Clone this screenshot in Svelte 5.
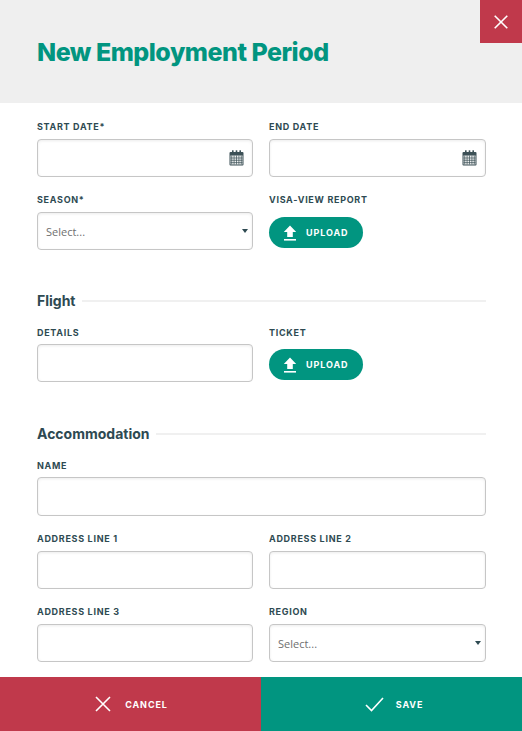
<script lang="ts">
	const calendarDots = [0, 1, 2, 3, 4];
</script>

{#snippet calendar()}
	<svg class="field-icon" width="15" height="16" viewBox="0 0 15 16" aria-hidden="true">
		<rect x="0.5" y="2" width="14" height="13.5" rx="1" fill="#3d5157" />
		<rect x="3" y="0.3" width="1.6" height="3" fill="#3d5157" />
		<rect x="6.7" y="0.3" width="1.6" height="3" fill="#3d5157" />
		<rect x="10.4" y="0.3" width="1.6" height="3" fill="#3d5157" />
		<rect x="1.5" y="5.5" width="12" height="9" fill="#eef0f0" />
		{#each calendarDots as col}
			<line x1={2.7 + col * 2.4} y1="5.5" x2={2.7 + col * 2.4} y2="14.5" stroke="#3d5157" stroke-width="0.7" />
		{/each}
		<line x1="1.5" y1="8" x2="13.5" y2="8" stroke="#3d5157" stroke-width="0.7" />
		<line x1="1.5" y1="10.3" x2="13.5" y2="10.3" stroke="#3d5157" stroke-width="0.7" />
		<line x1="1.5" y1="12.6" x2="13.5" y2="12.6" stroke="#3d5157" stroke-width="0.7" />
	</svg>
{/snippet}

{#snippet upload()}
	<button class="upload" type="button">
		<svg width="14" height="16" viewBox="0 0 14 16" aria-hidden="true">
			<path d="M7 0.5 L13.2 7 H9.8 V12 H4.2 V7 H0.8 Z" fill="#fff" />
			<rect x="1" y="14" width="12" height="1.6" fill="#fff" />
		</svg>
		<span>UPLOAD</span>
	</button>
{/snippet}

{#snippet picker()}
	<div class="control">
		<select>
			<option>Select...</option>
		</select>
		<span class="caret"></span>
	</div>
{/snippet}

<div class="modal">
	<header class="modal-header">
		<h1>New Employment Period</h1>
		<button class="close" type="button" aria-label="Close">
			<svg width="14" height="14" viewBox="0 0 14 14" aria-hidden="true">
				<path d="M0.7 0.7 L13.3 13.3 M13.3 0.7 L0.7 13.3" stroke="#fff" stroke-width="1.6" fill="none" />
			</svg>
		</button>
	</header>

	<form class="modal-body">
		<div class="grid">
			<div class="field">
				<label for="start">START DATE*</label>
				<div class="control">
					<input id="start" />
					{@render calendar()}
				</div>
			</div>
			<div class="field">
				<label for="end">END DATE</label>
				<div class="control">
					<input id="end" />
					{@render calendar()}
				</div>
			</div>
			<div class="field">
				<span class="label">SEASON*</span>
				{@render picker()}
			</div>
			<div class="field">
				<span class="label">VISA-VIEW REPORT</span>
				{@render upload()}
			</div>
		</div>

		<div class="section-title"><h2>Flight</h2></div>
		<div class="grid">
			<div class="field tight">
				<label for="details">DETAILS</label>
				<input id="details" />
			</div>
			<div class="field tight">
				<span class="label">TICKET</span>
				{@render upload()}
			</div>
		</div>

		<div class="section-title after-tight"><h2>Accommodation</h2></div>
		<div class="grid">
			<div class="field wide tight">
				<label for="name">NAME</label>
				<input id="name" class="tall" />
			</div>
			<div class="field">
				<label for="a1">ADDRESS LINE 1</label>
				<input id="a1" />
			</div>
			<div class="field">
				<label for="a2">ADDRESS LINE 2</label>
				<input id="a2" />
			</div>
			<div class="field">
				<label for="a3">ADDRESS LINE 3</label>
				<input id="a3" />
			</div>
			<div class="field">
				<span class="label">REGION</span>
				{@render picker()}
			</div>
		</div>
	</form>

	<footer class="actions">
		<button class="action cancel" type="button">
			<svg width="16" height="16" viewBox="0 0 16 16" aria-hidden="true">
				<path d="M1 1 L15 15 M15 1 L1 15" stroke="#fff" stroke-width="1.6" fill="none" />
			</svg>
			<span>CANCEL</span>
		</button>
		<button class="action save" type="button">
			<svg width="19" height="15" viewBox="0 0 19 15" aria-hidden="true">
				<path d="M1 8 L6.5 13.5 L18 1" stroke="#fff" stroke-width="1.6" fill="none" />
			</svg>
			<span>SAVE</span>
		</button>
	</footer>
</div>

<style>
	:global(body) {
		margin: 0;
		background: #fff;
	}

	.modal {
		display: flex;
		flex-direction: column;
		height: 731px;
		overflow: hidden;
		font-family: 'Inter', 'Liberation Sans', sans-serif;
		color: #2e4a52;
	}

	.modal-header {
		position: relative;
		flex: 0 0 103px;
		display: flex;
		align-items: center;
		padding: 1px 37px 0;
		box-sizing: border-box;
		background: #efefef;
	}

	h1 {
		margin: 0;
		font-size: 25px;
		font-weight: 800;
		letter-spacing: -0.5px;
		color: #019580;
	}

	.close {
		position: absolute;
		top: 0;
		right: 0;
		width: 42px;
		height: 43px;
		display: flex;
		align-items: center;
		justify-content: center;
		padding: 0;
		border: 0;
		background: #c0394b;
	}

	.modal-body {
		flex: 1;
		min-height: 0;
		padding: 18px 36px 0 37px;
	}

	.grid {
		display: grid;
		grid-template-columns: 216px 217px;
		column-gap: 16px;
		row-gap: 17px;
	}

	.field {
		display: flex;
		flex-direction: column;
		gap: 6px;
		min-width: 0;
	}

	.tight {
		gap: 5px;
	}

	.wide {
		grid-column: 1 / -1;
	}

	label,
	.label {
		font-size: 9px;
		line-height: 12px;
		font-weight: 700;
		letter-spacing: 0.7px;
		color: #2e4a52;
	}

	.control {
		position: relative;
	}

	input,
	select {
		display: block;
		width: 100%;
		height: 38px;
		box-sizing: border-box;
		padding: 0 8px;
		border: 1px solid #c6c6c6;
		border-radius: 4px;
		background: #fff;
		box-shadow: inset 0 1px 3px rgba(0, 0, 0, 0.08);
		font-family: 'Open Sans', 'Liberation Sans', sans-serif;
		font-size: 11px;
		color: #6f6f6f;
		appearance: none;
		outline: none;
	}

	input.tall {
		height: 39px;
	}

	.field-icon {
		position: absolute;
		top: 11px;
		right: 9px;
	}

	.caret {
		position: absolute;
		top: 17px;
		right: 5px;
		width: 0;
		height: 0;
		border-left: 3.5px solid transparent;
		border-right: 3.5px solid transparent;
		border-top: 4px solid #2e4a52;
	}

	.upload {
		display: flex;
		align-items: center;
		gap: 9px;
		width: 94px;
		height: 31px;
		margin-top: 5px;
		padding: 0 0 0 14px;
		box-sizing: border-box;
		border: 0;
		border-radius: 16px;
		background: #019580;
		color: #fff;
		font-family: 'Inter', 'Liberation Sans', sans-serif;
		font-size: 9px;
		font-weight: 700;
		letter-spacing: 0.9px;
	}

	.section-title {
		display: flex;
		align-items: center;
		gap: 6px;
		height: 20px;
		margin: 40px 0 17px;
	}

	.section-title.after-tight {
		margin-top: 41px;
	}

	.section-title::after {
		content: '';
		flex: 1;
		height: 2px;
		margin-top: 2px;
		background: #f0f0f0;
	}

	h2 {
		margin: 0;
		font-size: 14px;
		font-weight: 700;
		color: #2e4a52;
	}

	.actions {
		flex: 0 0 54px;
		display: grid;
		grid-template-columns: 261px 261px;
	}

	.action {
		display: flex;
		align-items: center;
		justify-content: center;
		gap: 14px;
		padding: 0;
		border: 0;
		color: #fff;
		font-family: 'Inter', 'Liberation Sans', sans-serif;
		font-size: 9px;
		font-weight: 700;
		letter-spacing: 0.9px;
	}

	.cancel {
		padding-left: 2px;
		background: #c0394b;
	}

	.save {
		gap: 12px;
		padding-left: 5px;
		background: #019580;
	}
</style>
